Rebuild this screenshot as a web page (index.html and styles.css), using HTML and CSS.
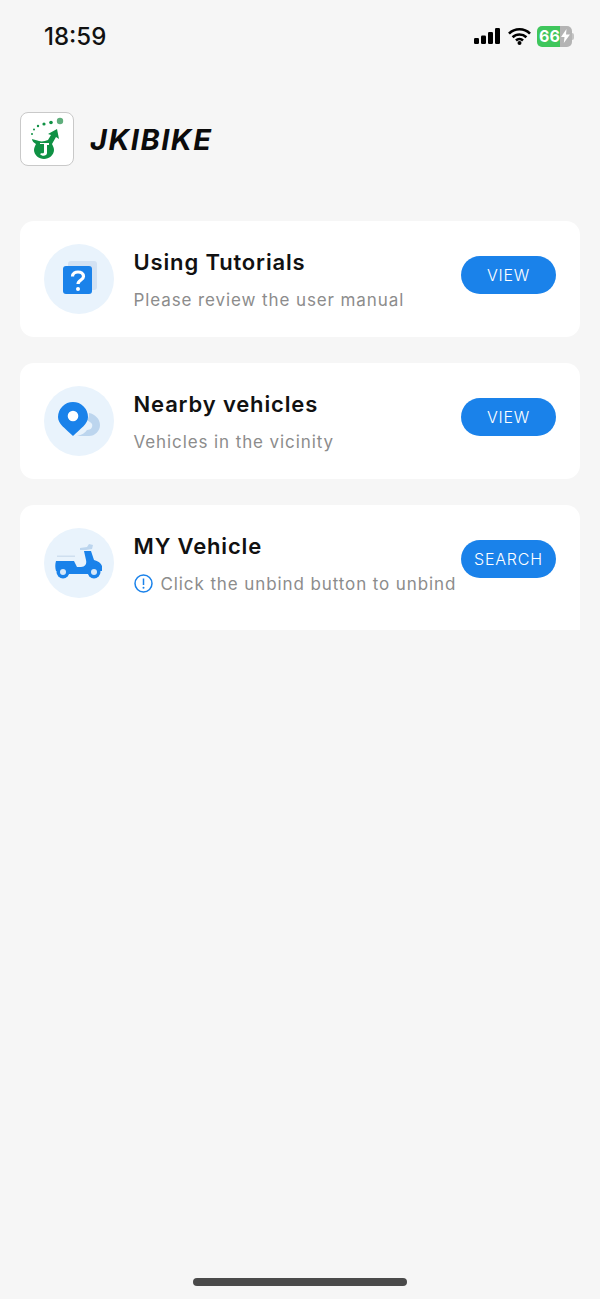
FILE: index.html
```html
<!DOCTYPE html>
<html lang="en">
<head>
  <meta charset="utf-8">
  <title>JKIBIKE</title>
  <link rel="stylesheet" href="styles.css">
</head>
<body>
  <div class="status">
    <span class="time">18:59</span>
    <div class="status-icons">
      <svg class="signal" width="27" height="16" viewBox="0 0 27 16"><rect x="0" y="10" width="5" height="6" rx="1.2"/><rect x="7" y="7.5" width="5" height="8.5" rx="1.2"/><rect x="14" y="4" width="5" height="12" rx="1.2"/><rect x="21" y="0" width="5" height="16" rx="1.2"/></svg>
      <svg width="23" height="17" viewBox="0 0 23 17"><path d="M1 5.6a15 15 0 0 1 21 0M4.6 9.2a10 10 0 0 1 13.8 0M8 12.5a5 5 0 0 1 7 0" fill="none" stroke="#000" stroke-width="2.6"/><circle cx="11.5" cy="15" r="2"/></svg>
      <div class="battery"><span class="battery-num">66</span><svg class="bolt" width="9" height="14" viewBox="0 0 9 14"><path d="M5.5 0 0 8h3.5L2.800 14 9 5.500H5z" fill="#fff"/></svg><i class="battery-nub"></i></div>
    </div>
  </div>

  <header class="brand">
    <div class="logo">
      <svg width="52" height="52" viewBox="0 0 52 52">
        <circle cx="39" cy="8" r="3.200" fill="#5fae7c"/>
        <circle cx="30" cy="9.500" r="1.800" fill="#0f9144"/>
        <circle cx="23" cy="11" r="1.600" fill="#0f9144"/>
        <circle cx="17" cy="13" r="1.200" fill="#0f9144"/>
        <circle cx="13" cy="16.500" r="1" fill="#0f9144"/>
        <circle cx="11" cy="21" r="1" fill="#0f9144"/>
        <path d="M11 26c2 1 5 1 7 2 3 1 6 0 9-1l3-5-3-1 9-5 2 10-3-2-4 7c1 2 2 4 2 6 0 5-5 9-10 9s-10-4-10-9c0-2 1-4 2-6-2-1-4-3-4-5z" fill="#0f9144"/>
        <path d="M19 30h9v2h-2v8c0 3-5 4-7 1l2-1c1 1 2 0 2-1v-8h-4z" fill="#fff"/>
      </svg>
    </div>
    <h1 class="brand-name">JKIBIKE</h1>
  </header>

  <main class="cards">
    <section class="card">
      <div class="card-icon">
        <svg width="70" height="70" viewBox="0 0 70 70">
          <rect x="24" y="17" width="29" height="29" rx="3" fill="#d3e2f3"/>
          <rect x="19" y="22" width="29" height="28" rx="3" fill="#1a82ea"/>
          <path d="M28.500 32.500c0-6 11-6 11 0 0 3.500-5.500 3.500-5.500 7.500" fill="none" stroke="#fff" stroke-width="3.200"/>
          <circle cx="34" cy="45" r="2" fill="#fff"/>
        </svg>
      </div>
      <div class="card-text">
        <h2 class="card-title">Using Tutorials</h2>
        <p class="card-sub">Please review the user manual</p>
      </div>
      <a class="btn">VIEW</a>
    </section>

    <section class="card">
      <div class="card-icon">
        <svg width="70" height="70" viewBox="0 0 70 70">
          <path d="M45 27c6 1 11 6 11 12 0 6-5 11-11 11H33c5-1 8-3 10-6 4 0 6-3 5-6-1-2-4-3-5-4 2-2 2-5 2-7z" fill="#bcd5ee"/>
          <path d="M29 50C21 42 14 38 14 31a15 15 0 0 1 30 0c0 7-7 11-15 19z" fill="#1a82ea"/>
          <circle cx="29" cy="30" r="5.300" fill="#fff"/>
        </svg>
      </div>
      <div class="card-text">
        <h2 class="card-title">Nearby vehicles</h2>
        <p class="card-sub">Vehicles in the vicinity</p>
      </div>
      <a class="btn">VIEW</a>
    </section>

    <section class="card card-last">
      <div class="card-icon">
        <svg width="70" height="70" viewBox="0 0 70 70">
          <path d="M36 20l7-1 2-3 4 1-1 4-6 1-6 0z" fill="#bcd5ee"/>
          <rect x="13" y="27.500" width="18" height="1.500" fill="#cfdfef"/>
          <path d="M12 33H30L33 39H37C41 39 43 36 42 32L40 23H47L50 32C54 33 57 35 58 38V43H12C11 40 11 36 12 33z" fill="#1a82ea"/>
          <rect x="14" y="40" width="42" height="6" fill="#1a82ea"/>
          <circle cx="19" cy="44" r="6.500" fill="#1a82ea"/>
          <circle cx="19" cy="44" r="3" fill="#d6e8fa"/>
          <circle cx="50" cy="44" r="6.500" fill="#1a82ea"/>
          <circle cx="50" cy="44" r="3" fill="#d6e8fa"/>
        </svg>
      </div>
      <div class="card-text">
        <h2 class="card-title">MY Vehicle</h2>
        <p class="card-sub card-sub-notice">
          <svg class="notice" width="19" height="19" viewBox="0 0 19 19"><circle cx="9.500" cy="9.500" r="8.500" fill="none" stroke="#1a82ea" stroke-width="1.500"/><path d="M9.500 4.500v6.500" stroke="#1a82ea" stroke-width="1.500"/><circle cx="9.500" cy="13.800" r="1" fill="#1a82ea"/></svg>
          Click the unbind button to unbind
        </p>
      </div>
      <a class="btn btn-search">SEARCH</a>
    </section>
  </main>

  <div class="home-bar"></div>
</body>
</html>
```

FILE: styles.css
```css
html, body {
  margin: 0;
  padding: 0;
}

body {
  width: 600px;
  height: 1299px;
  overflow: hidden;
  background: #f6f6f6;
  font-family: Inter, "Liberation Sans", sans-serif;
  display: flex;
  flex-direction: column;
}

.status {
  height: 72px;
  padding: 0 28px 0 44px;
  display: flex;
  align-items: center;
  justify-content: space-between;
  box-sizing: border-box;
}

.time {
  font-size: 24px;
  font-weight: 500;
  color: #111;
}

.status-icons {
  display: flex;
  align-items: center;
  gap: 6px;
}

.signal {
  margin-right: 1px;
}

.battery {
  width: 35px;
  height: 21px;
  border-radius: 5px;
  background: linear-gradient(to right, #3fc65c 0, #3fc65c 23px, #b4b4b4 23px);
  display: flex;
  align-items: center;
  position: relative;
}

.battery-num {
  width: 23px;
  padding-left: 2px;
  box-sizing: border-box;
  font-size: 16px;
  font-weight: 700;
  line-height: 21px;
  color: #fff;
}

.bolt {
  margin-left: 1px;
}

.battery-nub {
  position: absolute;
  right: -2px;
  top: 7px;
  width: 2px;
  height: 7px;
  border-radius: 0 2px 2px 0;
  background: #c4c4c4;
}

.brand {
  margin: 40px 0 0 20px;
  display: flex;
  align-items: center;
  gap: 16px;
}

.logo {
  width: 54px;
  height: 54px;
  box-sizing: border-box;
  border: 1.5px solid #c9c9c9;
  border-radius: 8px;
  background: #fff;
  display: flex;
  align-items: center;
  justify-content: center;
}

.brand-name {
  margin: 0;
  font-size: 29px;
  font-weight: 700;
  font-style: italic;
  letter-spacing: 1.5px;
  color: #0b0b0b;
}

.cards {
  margin: 55px 20px 0;
  display: flex;
  flex-direction: column;
  gap: 26px;
}

.card {
  height: 116px;
  box-sizing: border-box;
  padding: 23px 24px 0;
  background: #fff;
  border-radius: 14px;
  display: flex;
  align-items: flex-start;
}

.card-last {
  height: 125px;
  border-radius: 14px 14px 0 0;
}

.card-icon {
  width: 70px;
  height: 70px;
  flex: none;
  border-radius: 50%;
  background: #e9f3fc;
}

.card-icon svg {
  display: block;
}

.card-text {
  margin-left: 19.500px;
  flex: 1;
  min-width: 0;
}

.card-title {
  margin: 3px 0 0;
  font-size: 22px;
  line-height: 30px;
  font-weight: 600;
  letter-spacing: 0.85px;
  color: #111;
}

.card-sub {
  margin: 10.500px 0 0;
  font-size: 17px;
  line-height: 24px;
  letter-spacing: 0.9px;
  color: #8c8c8c;
  white-space: nowrap;
}

.card-sub-notice {
  display: flex;
  align-items: center;
  gap: 8px;
}

.notice {
  flex: none;
}

.btn {
  width: 95px;
  height: 38px;
  margin-top: 12px;
  flex: none;
  border-radius: 19px;
  background: #1a82ea;
  color: #fff;
  font-size: 16px;
  font-weight: 300;
  line-height: 38px;
  letter-spacing: 0.8px;
  text-align: center;
}

.home-bar {
  width: 214px;
  height: 8px;
  margin: auto auto 13px;
  border-radius: 4px;
  background: #4a4a4a;
}
```
